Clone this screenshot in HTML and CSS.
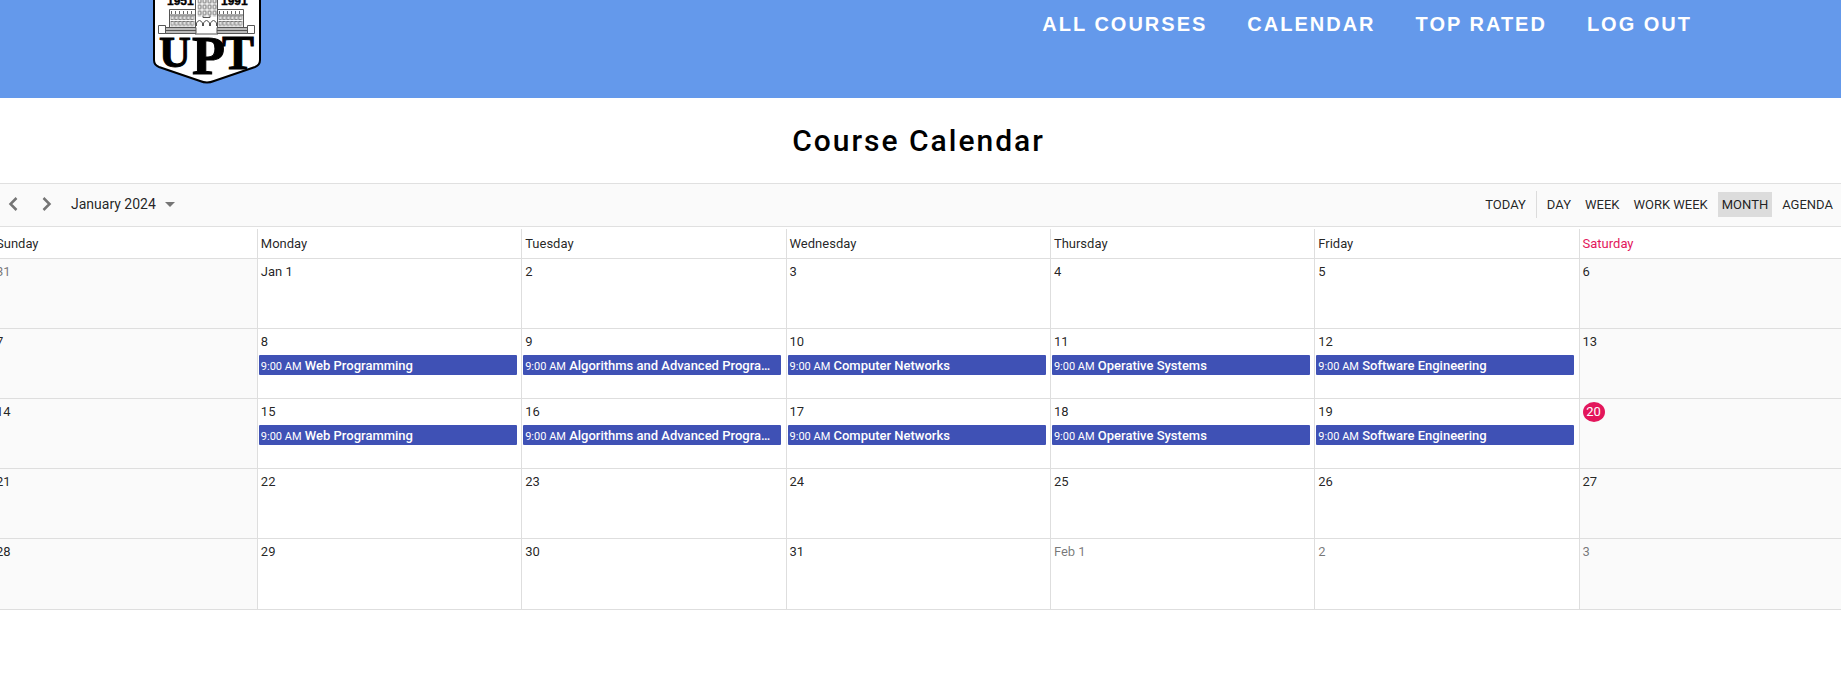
FILE: index.html
```html
<!DOCTYPE html>
<html lang="en">
<head>
<meta charset="utf-8">
<title>Course Calendar</title>
<link rel="stylesheet" href="styles.css">
</head>
<body>
<header class="site-header">
  <svg class="logo" width="110" height="86" viewBox="152 0 110 86" role="img" aria-label="UPT 1951 1991">
    <defs>
      <pattern id="panes" x="170.500" y="15.500" width="4" height="5.500" patternUnits="userSpaceOnUse">
        <rect x="0.500" y="0.500" width="2.500" height="3.500" fill="#fff" stroke="#555" stroke-width="0.700"/>
      </pattern>
      <pattern id="tower-panes" x="197.500" y="-1.500" width="5" height="6" patternUnits="userSpaceOnUse">
        <rect x="0.700" y="0.700" width="2.800" height="3.500" fill="#fff" stroke="#444" stroke-width="0.800"/>
      </pattern>
    </defs>
    <path class="shield" d="M154 -20V60Q154 65 159 67L200 81Q207 84 214 81L255 67Q260 65 260 60V-20Z"/>
    <g class="logo-year"><text x="167" y="5">1951</text><text x="221" y="5">1991</text></g>
    <g class="building">
      <rect class="tower" x="195.500" y="-5" width="22" height="39"/>
      <path d="M169.500 28V9.500H195.500M217.500 9.500H243.500V28M169.500 15H195M218 15H243"/>
      <path class="windows" d="M171 12.500H195M219 12.500H243"/>
      <path fill="url(#panes)" stroke="none" d="M170.500 15.500H194.500V26.500H170.500ZM218.500 15.500H242.500V26.500H218.500Z"/>
      <path fill="url(#tower-panes)" stroke="none" d="M197.500 -1.500H217V16.500H197.500Z"/>
      <path d="M196.500 26V23Q199.500 18 202.500 23V26M203.500 26V23Q206.500 18 209.500 23V26M210.500 26V23Q213.500 18 216.500 23V26M203 15.500V17.500H210V15.500"/>
      <path class="plinth" d="M165 27.500H196V33.500H165ZM217 27.500H248V33.500H217Z"/>
      <path class="plinth" d="M165 30.500H196M217 30.500H248"/>
      <path class="block" d="M158.500 25.500H165.500V33.500H158.500ZM247.500 25.500H254.500V33.500H247.500Z"/>
    </g>
    <g class="logo-name"><text x="159" y="67" font-size="44">U</text><text x="192" y="74" font-size="54">P</text><text x="222" y="69" font-size="48">T</text></g>
  </svg>
  <nav class="main-nav">
    <a href="#">ALL COURSES</a><a href="#">CALENDAR</a><a href="#">TOP RATED</a><a href="#">LOG OUT</a>
  </nav>
</header>
<main class="page">
  <h1 class="title">Course Calendar</h1>
  <section class="scheduler">
    <div class="toolbar">
      <div class="date-nav">
        <button class="arrow" aria-label="Previous"><svg width="10" height="14" viewBox="0 0 10 14"><path d="M8.500 1L2.500 7L8.500 13"/></svg></button>
        <button class="arrow" aria-label="Next"><svg width="10" height="14" viewBox="0 0 10 14"><path d="M1.500 1L7.500 7L1.500 13"/></svg></button>
        <button class="range">January 2024<span class="caret"></span></button>
      </div>
      <div class="views">
        <button>TODAY</button><span class="separator"></span><button>DAY</button><button>WEEK</button><button>WORK WEEK</button><button class="active">MONTH</button><button>AGENDA</button>
      </div>
    </div>
    <table class="month">
      <thead><tr><th>Sunday</th><th>Monday</th><th>Tuesday</th><th>Wednesday</th><th>Thursday</th><th>Friday</th><th class="current">Saturday</th></tr></thead>
      <tbody>
        <tr><td class="other">31</td><td>Jan 1</td><td>2</td><td>3</td><td>4</td><td>5</td><td>6</td></tr>
        <tr><td>7</td>
          <td>8<div class="event"><span class="time">9:00 AM</span> Web Programming</div></td>
          <td>9<div class="event"><span class="time">9:00 AM</span> Algorithms and Advanced Programming</div></td>
          <td>10<div class="event"><span class="time">9:00 AM</span> Computer Networks</div></td>
          <td>11<div class="event"><span class="time">9:00 AM</span> Operative Systems</div></td>
          <td>12<div class="event"><span class="time">9:00 AM</span> Software Engineering</div></td>
          <td>13</td></tr>
        <tr><td>14</td>
          <td>15<div class="event"><span class="time">9:00 AM</span> Web Programming</div></td>
          <td>16<div class="event"><span class="time">9:00 AM</span> Algorithms and Advanced Programming</div></td>
          <td>17<div class="event"><span class="time">9:00 AM</span> Computer Networks</div></td>
          <td>18<div class="event"><span class="time">9:00 AM</span> Operative Systems</div></td>
          <td>19<div class="event"><span class="time">9:00 AM</span> Software Engineering</div></td>
          <td><span class="today">20</span></td></tr>
        <tr><td>21</td><td>22</td><td>23</td><td>24</td><td>25</td><td>26</td><td>27</td></tr>
        <tr><td>28</td><td>29</td><td>30</td><td>31</td><td class="other">Feb 1</td><td class="other">2</td><td class="other">3</td></tr>
      </tbody>
    </table>
  </section>
</main>
</body>
</html>
```
FILE: styles.css
```css
* { box-sizing: border-box; }
body { margin: 0; background: #fff; color: rgba(0,0,0,.87); font-family: Roboto, sans-serif; overflow-x: hidden; }
button { border: 0; background: none; padding: 0; font: inherit; color: inherit; cursor: pointer; }

.site-header { display: flex; justify-content: space-between; align-items: flex-start; height: 98px; padding: 0 149px 0 152px; background: #6499eb; }
.logo { display: block; }
.shield { fill: #fff; stroke: #000; stroke-width: 2; }
.logo-year { font: bold 12px "Liberation Sans", Arial, sans-serif; stroke: #000; stroke-width: .4; }
.logo-name { font-family: "Liberation Serif", serif; font-weight: bold; stroke: #000; stroke-width: 1; }
.building { fill: none; stroke: #555; stroke-width: 1; }
.tower { fill: #fff; }
.windows { stroke: #666; stroke-width: 3; stroke-dasharray: 1 3; }
.plinth { fill: #bbb; }
.block { fill: #fff; }
.main-nav { display: flex; gap: 40px; padding-top: 12px; }
.main-nav a { color: #fff; text-decoration: none; font: bold 20px/24px "Liberation Sans", Arial, sans-serif; letter-spacing: 2px; }

.page { margin: 0 -3px 0 -7px; }
.title { margin: 0; padding: 25px 0 24px; font-size: 30px; line-height: 36px; font-weight: 500; letter-spacing: 2px; text-align: center; color: #000; }
.toolbar { display: flex; justify-content: space-between; align-items: center; height: 44px; padding: 0 7px 2px; background: #fafafa; border: solid #e0e0e0; border-width: 1px 0; font-size: 14px; }
.date-nav, .views { display: flex; align-items: center; }
.arrow { display: flex; align-items: center; justify-content: center; width: 26px; height: 26px; margin-right: 8px; }
.arrow path { fill: none; stroke: #757575; stroke-width: 2.5; }
.range { display: flex; align-items: center; gap: 9px; padding-left: 3px; }
.caret { border: solid transparent; border-width: 5px 5px 0; border-top-color: #757575; }
.views { gap: 6px; font-size: 13px; }
.views button { height: 25px; padding: 0 4px; }
.views .active { background: #dcdcdc; }
.separator { width: 1px; height: 27px; background: #dcdcdc; }

.month { width: 100%; margin-top: 2px; border-collapse: collapse; table-layout: fixed; font-size: 13px; line-height: 20px; }
.month th, .month td { padding: 3px; border: solid #dedede; border-width: 0 1px 1px 0; text-align: left; vertical-align: top; font-weight: 400; }
.month th { height: 29px; padding-top: 5px; }
.month td { height: 70px; }
.month tr:last-child td { height: 71px; }
.month td:first-child, .month td:last-child { background: #fafafa; }
.month .current { color: #e3165b; }
.month .other { color: rgba(0,0,0,.54); }
.today { display: inline-block; width: 22px; border-radius: 50%; background: #e3165b; color: #fff; text-align: center; }
.event { height: 20px; line-height: 22px; margin: 3px 0 0 -2px; padding: 0 8px 0 2px; width: 258px; border-radius: 1px; background: #3f51b5; color: #fff; font-weight: 500; overflow: hidden; white-space: nowrap; text-overflow: ellipsis; }
.time { font-size: 11px; font-weight: 400; }
```
